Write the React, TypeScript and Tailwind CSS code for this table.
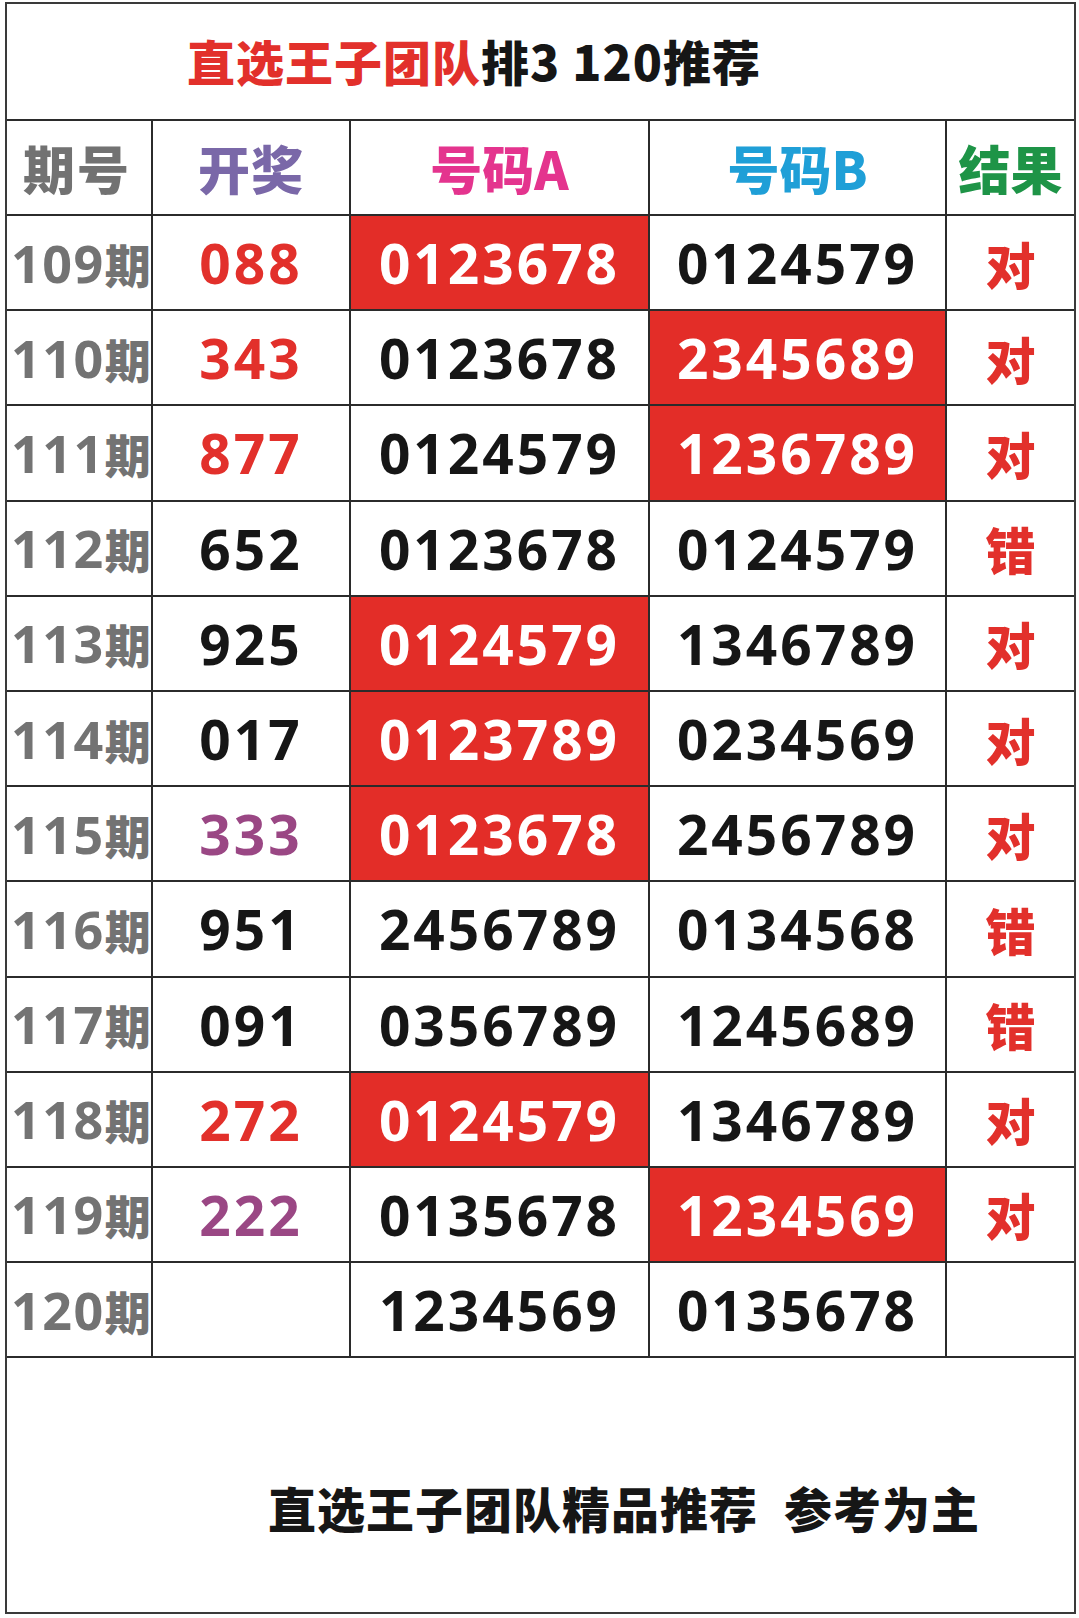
import React from "react";

type Row = {
  no: string;
  draw: string;
  drawColor: string;
  a: string;
  aRed: boolean;
  b: string;
  bRed: boolean;
  res: string;
};

const RED = "text-[#e2302b]";
const BLACK = "text-[#161616]";
const PURPLE = "text-[#9a4784]";

const rows: Row[] = [
  { no: "109", draw: "088", drawColor: RED, a: "0123678", aRed: true, b: "0124579", bRed: false, res: "对" },
  { no: "110", draw: "343", drawColor: RED, a: "0123678", aRed: false, b: "2345689", bRed: true, res: "对" },
  { no: "111", draw: "877", drawColor: RED, a: "0124579", aRed: false, b: "1236789", bRed: true, res: "对" },
  { no: "112", draw: "652", drawColor: BLACK, a: "0123678", aRed: false, b: "0124579", bRed: false, res: "错" },
  { no: "113", draw: "925", drawColor: BLACK, a: "0124579", aRed: true, b: "1346789", bRed: false, res: "对" },
  { no: "114", draw: "017", drawColor: BLACK, a: "0123789", aRed: true, b: "0234569", bRed: false, res: "对" },
  { no: "115", draw: "333", drawColor: PURPLE, a: "0123678", aRed: true, b: "2456789", bRed: false, res: "对" },
  { no: "116", draw: "951", drawColor: BLACK, a: "2456789", aRed: false, b: "0134568", bRed: false, res: "错" },
  { no: "117", draw: "091", drawColor: BLACK, a: "0356789", aRed: false, b: "1245689", bRed: false, res: "错" },
  { no: "118", draw: "272", drawColor: RED, a: "0124579", aRed: true, b: "1346789", bRed: false, res: "对" },
  { no: "119", draw: "222", drawColor: PURPLE, a: "0135678", aRed: false, b: "1234569", bRed: true, res: "对" },
  { no: "120", draw: "", drawColor: BLACK, a: "1234569", aRed: false, b: "0135678", bRed: false, res: "" },
];

const NUM = "font-['Open_Sans','Noto_Sans_CJK_SC',sans-serif] font-bold";
const CJK = "font-['Noto_Sans_CJK_SC','Noto_Sans',sans-serif] font-black";
const GRID = "grid grid-cols-[146px_198px_299px_297px_127px]";

export default function App() {
  return (
    <div className="w-[1079px] h-[1618px] bg-white pt-[2px] pl-[5px]">
      <div className="w-[1071px] h-[1612px] border-2 border-[#3a3a3a] flex flex-col">
        {/* Title */}
        <div className="h-[117px] border-b-2 border-[#2b2b2b] flex items-center pl-[180px] pb-[4px] shrink-0">
          <span className={`${CJK} text-[48px] leading-none tracking-[1px] text-[#e2302b]`}>直选王子团队</span>
          <span className={`${CJK} text-[48px] leading-none tracking-[1px] text-[#161616]`}>排3 120推荐</span>
        </div>

        {/* Header */}
        <div className={`${GRID} h-[95px] border-b-2 border-[#2b2b2b] shrink-0`}>
          <div className="border-r-2 border-[#2b2b2b] flex items-center pl-[16px]">
            <span className={`${CJK} text-[52px] leading-none tracking-[2px] text-[#727272]`}>期号</span>
          </div>
          <div className="border-r-2 border-[#2b2b2b] flex items-center justify-center">
            <span className={`${CJK} text-[52px] leading-none tracking-[1px] text-[#7a68a8]`}>开奖</span>
          </div>
          <div className="border-r-2 border-[#2b2b2b] flex items-center justify-center">
            <span className={`${CJK} text-[52px] leading-none text-[#e4348e]`}>号码A</span>
          </div>
          <div className="border-r-2 border-[#2b2b2b] flex items-center justify-center">
            <span className={`${CJK} text-[52px] leading-none text-[#1f9fd7]`}>号码B</span>
          </div>
          <div className="flex items-center justify-center">
            <span className={`${CJK} text-[52px] leading-none text-[#1e9447]`}>结果</span>
          </div>
        </div>

        {/* Rows */}
        {rows.map((r) => (
          <div key={r.no} className={`${GRID} h-[95.2px] border-b-2 border-[#2b2b2b] shrink-0`}>
            <div className="border-r-2 border-[#2b2b2b] flex items-center pl-[4px]">
              <span className={`${NUM} text-[52px] leading-none tracking-[1.5px] text-[#737373]`}>{r.no}</span>
              <span className={`${CJK} text-[46px] leading-none text-[#737373]`}>期</span>
            </div>
            <div className="border-r-2 border-[#2b2b2b] flex items-center justify-center">
              <span className={`${NUM} text-[55px] leading-none tracking-[3px] ${r.drawColor}`}>{r.draw}</span>
            </div>
            <div
              className={`border-r-2 border-[#2b2b2b] flex items-center justify-center ${
                r.aRed ? "bg-[#e32d28]" : "bg-white"
              }`}
            >
              <span className={`${NUM} text-[55px] leading-none tracking-[3px] ${r.aRed ? "text-white" : "text-[#161616]"}`}>
                {r.a}
              </span>
            </div>
            <div
              className={`border-r-2 border-[#2b2b2b] flex items-center justify-center ${
                r.bRed ? "bg-[#e32d28]" : "bg-white"
              }`}
            >
              <span className={`${NUM} text-[55px] leading-none tracking-[3px] ${r.bRed ? "text-white" : "text-[#161616]"}`}>
                {r.b}
              </span>
            </div>
            <div className="flex items-center justify-center">
              <span className={`${CJK} text-[50px] leading-none text-[#e2302b]`}>{r.res}</span>
            </div>
          </div>
        ))}

        {/* Footer */}
        <div className="flex-1 flex items-start pt-[125px] pl-[261px]">
          <span className={`${CJK} text-[48px] leading-none tracking-[1px] text-[#161616]`}>直选王子团队精品推荐</span>
          <span className={`${CJK} text-[48px] leading-none tracking-[1px] text-[#161616] ml-[26px]`}>参考为主</span>
        </div>
      </div>
    </div>
  );
}
